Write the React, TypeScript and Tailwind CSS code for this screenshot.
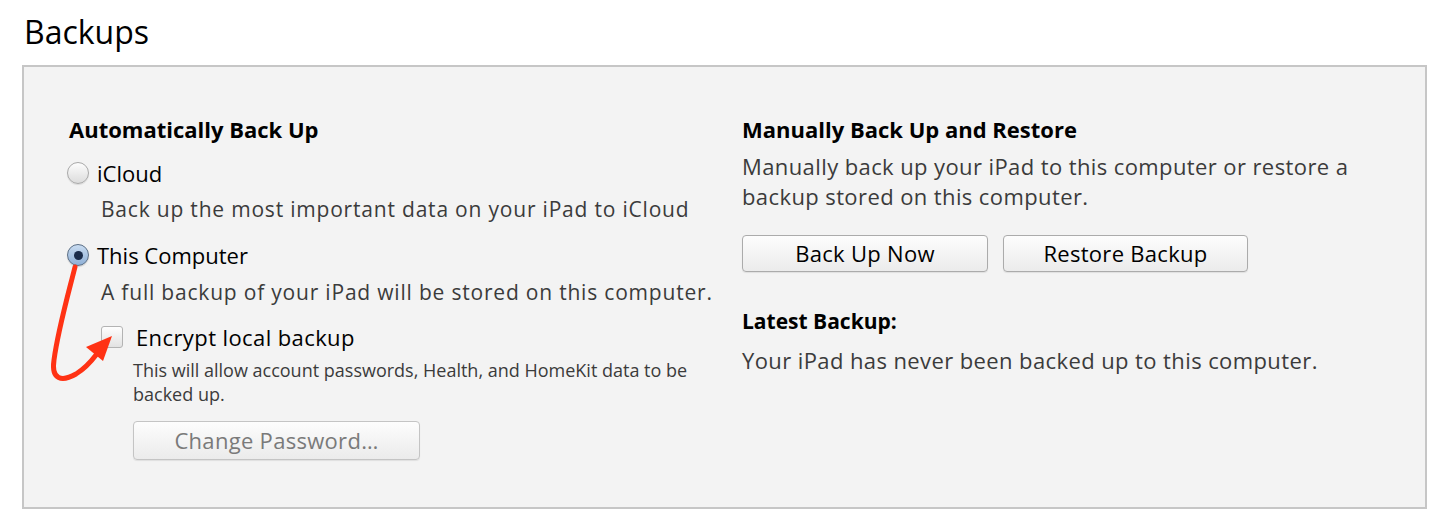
import React from 'react';

const font = { fontFamily: '"Open Sans", "Noto Sans", sans-serif' };

const Radio = ({ checked }: { checked?: boolean }) => (
  <span
    className={
      checked
        ? 'flex h-[22px] w-[22px] items-center justify-center rounded-full border border-[#5b6f86] bg-gradient-to-b from-[#c9dcf1] to-[#8fb0d6] shadow-[0_1px_1px_rgba(0,0,0,0.15)]'
        : 'flex h-[22px] w-[22px] items-center justify-center rounded-full border border-[#a9a9a9] bg-gradient-to-b from-[#fdfdfd] to-[#dcdcdc] shadow-[0_1px_1px_rgba(0,0,0,0.1)]'
    }
  >
    {checked && <span className="h-[9px] w-[9px] rounded-full bg-[#1b2c4a]" />}
  </span>
);

const Button = ({ label, disabled, className }: { label: string; disabled?: boolean; className?: string }) => (
  <button
    type="button"
    className={
      'flex items-center justify-center rounded-[4px] border bg-gradient-to-b from-[#fdfdfd] to-[#ebebeb] shadow-[0_1px_1px_rgba(0,0,0,0.08)] text-[22px] tracking-[0.3px] ' +
      (disabled ? 'text-[#7a7a7a] border-[#c4c4c4] ' : 'text-black border-[#ababab] ') +
      (className || '')
    }
  >
    {label}
  </button>
);

export default function App() {
  return (
    <div className="relative min-h-[526px] w-[1430px] bg-white" style={font}>
      <div className="px-[24px] pt-[10px]">
        <h1 className="text-[32px] leading-[44px] text-black">Backups</h1>
      </div>

      <div className="ml-[22px] mt-[11px] flex h-[444px] w-[1405px] border-2 border-[#c6c6c6] bg-[#f3f3f3] pl-[45px] pt-[48px]">
        {/* Left column */}
        <div className="w-[673px] shrink-0">
          <h2 className="text-[22px] font-bold leading-[28px] text-black">Automatically Back Up</h2>

          <div className="-ml-[2px] mt-[15px] flex items-center gap-[8px]">
            <Radio />
            <span className="text-[22px] leading-[30px] text-black">iCloud</span>
          </div>
          <p className="ml-[32px] mt-[7px] text-[21px] leading-[28px] tracking-[0.8px] text-[#3b3b3b]">
            Back up the most important data on your iPad to iCloud
          </p>

          <div className="-ml-[2px] mt-[17px] flex items-center gap-[8px]">
            <Radio checked />
            <span className="text-[22px] leading-[30px] text-black">This Computer</span>
          </div>
          <p className="ml-[32px] mt-[8px] text-[21px] leading-[28px] tracking-[0.8px] text-[#3b3b3b]">
            A full backup of your iPad will be stored on this computer.
          </p>

          <div className="ml-[32px] mt-[16px] flex items-center gap-[13px]">
            <span className="h-[22px] w-[22px] rounded-[3px] border border-[#b3b3b3] bg-gradient-to-b from-[#fefefe] to-[#e2e2e2]" />
            <span className="text-[22px] leading-[30px] tracking-[0.4px] text-black">Encrypt local backup</span>
          </div>
          <p className="ml-[64px] mt-[6px] w-[590px] text-[18px] leading-[24px] text-[#3b3b3b]">
            This will allow account passwords, Health, and HomeKit data to be backed up.
          </p>
          <Button label="Change Password…" disabled className="ml-[64px] mt-[15px] h-[39px] w-[287px]" />
        </div>

        {/* Right column */}
        <div className="flex-1">
          <h2 className="text-[22px] font-bold leading-[28px] text-black">Manually Back Up and Restore</h2>
          <p className="mt-[8px] w-[640px] text-[22px] leading-[30px] tracking-[0.4px] text-[#3b3b3b]">
            Manually back up your iPad to this computer or restore a backup stored on this computer.
          </p>
          <div className="mt-[24px] flex gap-[15px]">
            <Button label="Back Up Now" className="h-[37px] w-[246px]" />
            <Button label="Restore Backup" className="h-[37px] w-[245px]" />
          </div>
          <h2 className="mt-[35px] text-[21px] font-bold leading-[28px] text-black">Latest Backup:</h2>
          <p className="mt-[10px] text-[22px] leading-[30px] tracking-[0.4px] text-[#3b3b3b]">
            Your iPad has never been backed up to this computer.
          </p>
        </div>
      </div>

      {/* annotation arrow */}
      <svg className="pointer-events-none absolute left-0 top-0" width="1430" height="526" viewBox="0 0 1430 526">
        <path
          d="M75 267 C 68 295, 58 330, 54 360 C 51 380, 62 382, 76 374 C 84 369, 90 363, 96 355"
          fill="none"
          stroke="#ff3214"
          strokeWidth="5"
          strokeLinecap="round"
        />
        <polygon points="112,336 86,347 103,361" fill="#ff3214" />
      </svg>
    </div>
  );
}
